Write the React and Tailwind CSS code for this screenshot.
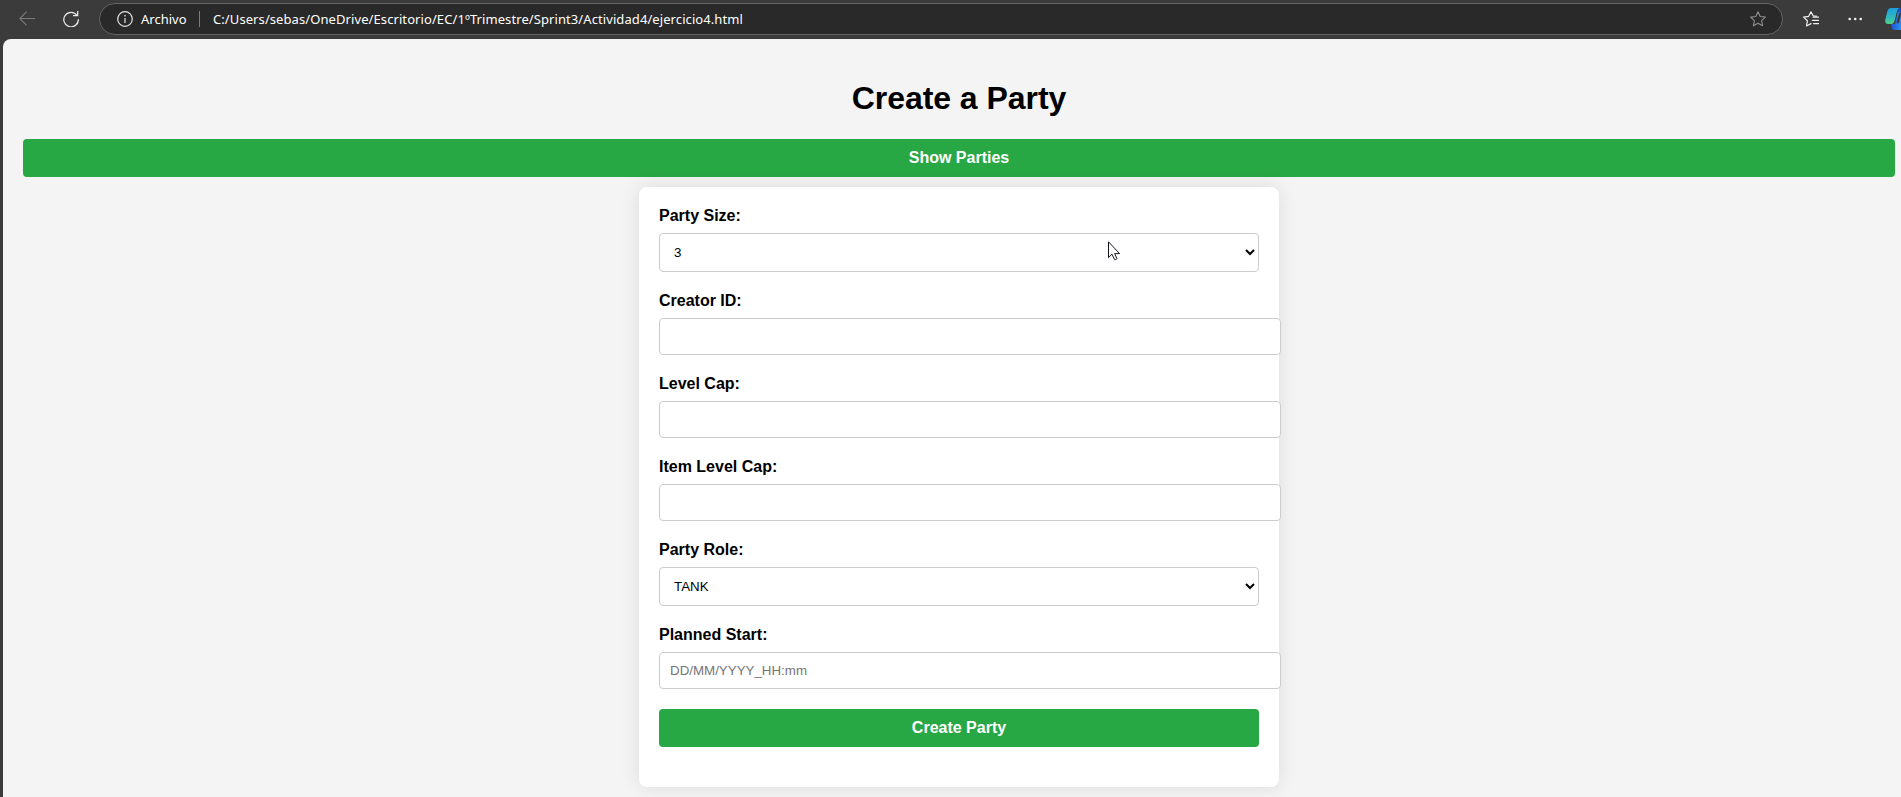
function BackIcon() {
  return (
    <svg className="h-4 w-4" viewBox="0 0 16 16" fill="none" stroke="#7a7a7a" strokeWidth="1.1">
      <path d="M16 8.5H0.8M7.6 1.7L0.8 8.5l6.8 6.8" />
    </svg>
  );
}

function ReloadIcon() {
  return (
    <svg className="h-4 w-4" viewBox="0 0 16 16" fill="none" stroke="#e8e8e8" strokeWidth="1.25">
      <path d="M14.1 4.4A7.3 7.3 0 1 0 15.4 8.3" />
      <path d="M14.7 0v4.5h-4.6" />
    </svg>
  );
}

function InfoIcon() {
  return (
    <svg className="h-4 w-4 shrink-0" viewBox="0 0 16 16" fill="none" stroke="#e4e4e4" strokeWidth="1.2">
      <circle cx="8" cy="8" r="7.3" />
      <path d="M8 7v5" />
      <path d="M8 4v1.5" strokeWidth="1.4" />
    </svg>
  );
}

function StarIcon() {
  return (
    <svg className="h-4 w-4" viewBox="0 0 16 16" fill="none" stroke="#8e8e8e" strokeWidth="1.1" strokeLinejoin="round">
      <path d="M8 0.8l2.2 4.7 5.2.6-3.8 3.5 1 5.2L8 12.2l-4.6 2.6 1-5.2L.6 6.1l5.2-.6z" />
    </svg>
  );
}

function FavoritesIcon() {
  return (
    <svg className="h-4 w-4" viewBox="0 0 16 16" fill="none" stroke="#f0f0f0" strokeWidth="1.2" strokeLinejoin="round" strokeLinecap="round">
      <path d="M13.4 5.2l-3.3-.4L8 0.8 5.7 5.3.6 6.1l3.8 3.7-.9 5.2L8 12.6" />
      <path d="M10.2 6.2h5.4M9.4 9.4h6.2M10.6 12.6h5" />
    </svg>
  );
}

function MoreIcon() {
  return (
    <svg className="h-4 w-4" viewBox="0 0 16 16" fill="#f0f0f0">
      <circle cx="1.7" cy="8" r="1.3" />
      <circle cx="7.2" cy="8" r="1.3" />
      <circle cx="12.7" cy="8" r="1.3" />
    </svg>
  );
}

function CopilotIcon() {
  return (
    <svg className="h-6 w-6 shrink-0" viewBox="0 0 24 24">
      <defs>
        <linearGradient id="leaf" x1="0" y1="0" x2="0" y2="1">
          <stop offset="0" stopColor="#1e9fe0" />
          <stop offset="0.5" stopColor="#2bb5c6" />
          <stop offset="1" stopColor="#52cf86" />
        </linearGradient>
        <linearGradient id="petal" x1="0" y1="0" x2="1" y2="0">
          <stop offset="0" stopColor="#1d4fd8" />
          <stop offset="1" stopColor="#35b4f2" />
        </linearGradient>
      </defs>
      <path d="M6 17h4l2.500-10.500C13 5 14 4.500 16 4.500h5V16c-1 4-2.500 7-5 7H10c-2 0-3-1-3.500-3z" fill="url(#petal)" />
      <path d="M12 6.500c1-2 2-2 5-2l-1.500-3.500h-4z" fill="#1c52b8" />
      <path d="M6.500 1H14c-1.200.5-1.700 2-2.200 4L9.500 14c-.6 2-1.500 3-3.500 3H3C.6 17-.2 15 .3 12.500L2.500 4C3 2 4.200 1 6.500 1z" fill="url(#leaf)" />
      <path d="M14 7h7v-1.500h-5c-1.200 0-1.700.4-2 1.500zM11.500 15.500L14 7l2.200 0-2.500 9.500z" fill="#3b3b3b" />
    </svg>
  );
}

function Cursor() {
  return (
    <svg className="pointer-events-none absolute left-[449px] top-2 h-5 w-[13px]" viewBox="0 0 13 20" fill="#fff" stroke="#15151f" strokeWidth="1">
      <path d="M0.500 0.800v15.800l3.500-3.400 2.500 5.300c.8.500 2.200-.1 2.400-.9l-2.300-5h5z" />
    </svg>
  );
}

function BrowserBar() {
  return (
    <header className="flex h-[39px] items-start bg-[#3b3b3b] pl-[19px] pt-[3px]">
      <div className="mt-[7px] flex w-20 gap-7">
        <BackIcon />
        <div className="mt-px">
          <ReloadIcon />
        </div>
      </div>
      <div className="flex h-8 w-[1684px] shrink-0 items-center rounded-full border border-[#646464] bg-[#292929] pl-[17px] pr-4 font-['Noto_Sans'] text-[13px] text-white">
        <InfoIcon />
        <span className="ml-2 w-[50px] whitespace-nowrap pt-px text-[13px]">Archivo</span>
        <span className="ml-2 h-4 w-px bg-[#7d7d7d]" />
        <span className="ml-[13px] whitespace-nowrap pt-px tracking-[0.086px]">
          C:/Users/sebas/OneDrive/Escritorio/EC/1ºTrimestre/Sprint3/Actividad4/ejercicio4.html
        </span>
        <div className="ml-auto">
          <StarIcon />
        </div>
      </div>
      <div className="ml-5 mt-2 flex shrink-0 gap-[29px]">
        <FavoritesIcon />
        <MoreIcon />
      </div>
      <div className="-mr-8 ml-[21px] mt-1 shrink-0">
        <CopilotIcon />
      </div>
    </header>
  );
}

function Label({ children }) {
  return <label className="mb-2 block h-[18px] text-base font-bold leading-[18px]">{children}</label>;
}

function TextField({ label, placeholder }) {
  return (
    <div className="mb-5">
      <Label>{label}</Label>
      <input
        type="text"
        placeholder={placeholder}
        className="block h-[37px] w-[622px] rounded border border-[#ccc] bg-white p-2.5 text-[13.333px] leading-[15px] placeholder:text-[#757575]"
      />
    </div>
  );
}

function SelectField({ label, value, children }) {
  return (
    <div className="mb-5">
      <Label>{label}</Label>
      <div className="relative">
        <select className="block h-[39px] w-full rounded border border-[#ccc] bg-white p-2.5 text-[13.333px] text-black">
          <option>{value}</option>
        </select>
        {children}
      </div>
    </div>
  );
}

function GreenButton({ children }) {
  return (
    <button className="block h-[38px] w-full rounded bg-[#28a745] text-base font-bold leading-[18px] text-white">
      {children}
    </button>
  );
}

export default function App() {
  return (
    <div className="h-[797px] w-full overflow-hidden bg-[#3b3b3b] font-['Liberation_Sans',Arial,sans-serif] text-black">
      <BrowserBar />
      <main className="ml-[3px] h-[758px] rounded-tl-lg bg-[#f4f4f4] pl-5 pr-1.5 pt-[41px]">
        <h1 className="mb-[22px] h-[37px] text-center text-[32px] font-bold leading-[37px] tracking-[-0.05px]">Create a Party</h1>
        <GreenButton>Show Parties</GreenButton>
        <form className="mx-auto mt-2.5 h-[600px] w-[640px] rounded-lg bg-white p-5 shadow-[0_0_20px_rgba(0,0,0,0.1)]">
          <SelectField label="Party Size:" value="3">
            <Cursor />
          </SelectField>
          <TextField label="Creator ID:" />
          <TextField label="Level Cap:" />
          <TextField label="Item Level Cap:" />
          <SelectField label="Party Role:" value="TANK" />
          <TextField label="Planned Start:" placeholder="DD/MM/YYYY_HH:mm" />
          <GreenButton>Create Party</GreenButton>
        </form>
      </main>
    </div>
  );
}
